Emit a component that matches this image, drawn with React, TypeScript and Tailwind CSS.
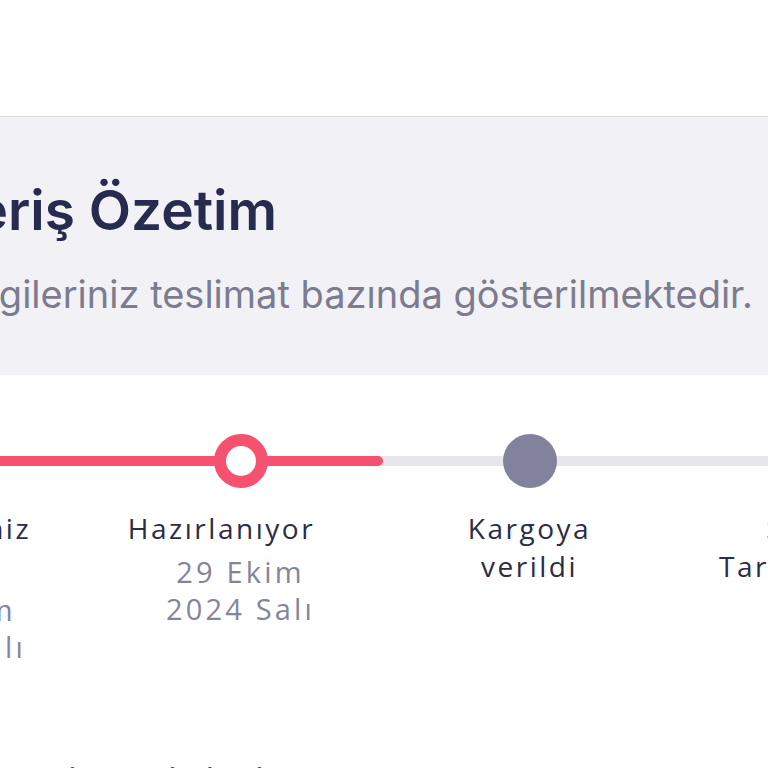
import React from 'react';

const steps = [
  { label: ['Siparişiniz', 'Alındı'], date: ['29 Ekim', '2024 Salı'], state: 'done' },
  { label: ['Hazırlanıyor'], date: ['29 Ekim', '2024 Salı'], state: 'current' },
  { label: ['Kargoya', 'verildi'], date: [], state: 'todo' },
  { label: ['Sipariş', 'Tarafınızdaki'], date: [], state: 'todo' },
];

function StepDot({ state }: { state: string }) {
  if (state === 'current') {
    return <div className="w-[54px] h-[54px] rounded-full border-[12px] border-[#f5526f] bg-white" />;
  }
  if (state === 'done') {
    return <div className="w-[54px] h-[54px]" />;
  }
  return <div className="w-[54px] h-[54px] rounded-full bg-[#82829c]" />;
}

export default function App() {
  return (
    <div className="w-[768px] h-[768px] overflow-hidden bg-white" style={{ fontFamily: 'Inter, "Liberation Sans", sans-serif' }}>
      <div className="h-[116px]" />

      {/* header panel */}
      <div className="h-[259px] border-t-[1.5px] border-[#d9d9df] bg-[#f2f2f6] pt-[66px]">
        <div className="w-[277px] flex justify-end">
          <h1 className="shrink-0 whitespace-nowrap text-[55px] leading-none font-semibold text-[#272b4f]">
            Alışveriş Özetim
          </h1>
        </div>
        <div className="mt-[37px] w-[753px] flex justify-end">
          <p className="shrink-0 whitespace-nowrap text-[38px] leading-none text-[#7c7c8e]">
            Sipariş bilgileriniz teslimat bazında gösterilmektedir.
          </p>
        </div>
      </div>

      {/* timeline */}
      <div className="relative mt-[59px]" style={{ fontFamily: '"Open Sans", sans-serif' }}>
        <div className="absolute left-0 right-0 top-[22px] h-[10px] bg-[#e6e6eb]" />
        <div className="absolute left-0 top-[22px] h-[10px] w-[383px] rounded-r-full bg-[#f5526f]" />
        <div className="relative flex ml-[-193px]">
          {steps.map((s, i) => (
            <div key={i} className="w-[289px] shrink-0 flex flex-col items-center">
              <StepDot state={s.state} />
              <div
                className={
                  'mt-[21px] text-center text-[28px] leading-[38px] tracking-[0.09em] text-[#2a2d45] whitespace-nowrap ' +
                  (s.state === 'current' ? 'mr-[38px]' : '')
                }
              >
                {s.label.map((l, j) => (
                  <div key={j}>{l}</div>
                ))}
              </div>
              {s.date.length > 0 && (
                <div className="mt-[6px] text-center text-[29px] leading-[37px] tracking-[0.11em] text-[#85859a] whitespace-nowrap">
                  {s.date.map((d, j) => (
                    <div key={j}>{d}</div>
                  ))}
                </div>
              )}
            </div>
          ))}
        </div>
      </div>

      <div className="mt-[99px] pl-[3px] text-[34px] leading-none text-[#3b3d5c] whitespace-nowrap">
        Teslimat Bilgileri
      </div>
    </div>
  );
}
